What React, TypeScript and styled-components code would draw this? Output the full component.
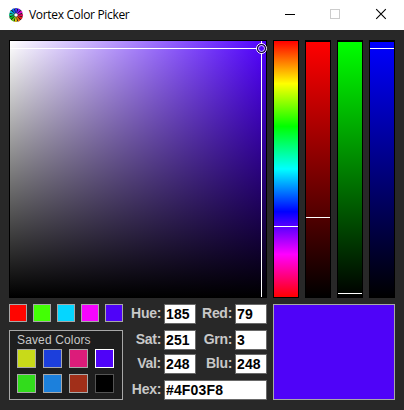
import React from 'react';
import styled, { createGlobalStyle } from 'styled-components';

const GlobalStyle = createGlobalStyle`
  * { box-sizing: border-box; }
  body { margin: 0; background: #282828; }
`;

const Window = styled.div`
  width: 404px;
  height: 410px;
  overflow: hidden;
  background: #282828;
  font-family: 'Liberation Sans', Arial, sans-serif;
`;

const TitleBar = styled.header`
  display: flex;
  align-items: center;
  height: 30px;
  padding-left: 8px;
  background: #fff;
`;

const Title = styled.h1`
  flex: 1;
  margin: 0 0 0 5px;
  font: 400 12px/16px 'Open Sans', 'Noto Sans', sans-serif;
  letter-spacing: -0.33px;
  color: #000;
  white-space: nowrap;
`;

const Controls = styled.div`
  display: flex;
  gap: 30px;
  padding-right: 14px;
`;

const ControlButton = styled.button`
  display: block;
  width: 16px;
  height: 16px;
  padding: 0;
  border: 0;
  background: none;
  svg { display: block; }
`;

const Pickers = styled.div`
  display: flex;
  gap: 6px;
  padding: 10px 9px 0;
`;

const Field = styled.div`
  position: relative;
  width: 258px;
  height: 258px;
  border: 1px solid #000;
  background:
    linear-gradient(to bottom, transparent, #000),
    linear-gradient(to right, #fff, #5000ff);
`;

const Crosshair = styled.svg`
  position: absolute;
  inset: 0;
  overflow: visible;
`;

const Track = styled.div<{ $fill: string; $top?: number }>`
  position: relative;
  width: 26px;
  height: 258px;
  border: 1px solid #000;
  border-top-width: ${(p) => p.$top ?? 2}px;
  background: ${(p) => p.$fill};
`;

const Marker = styled.div<{ $y: number }>`
  position: absolute;
  left: 0;
  right: 0;
  top: ${(p) => p.$y}px;
  height: 1px;
  background: #fff;
`;

const Lower = styled.div`
  display: grid;
  grid-template-columns: 114px 144px 128px;
  padding: 6px 9px 0;
`;

const SwatchRow = styled.div`
  display: flex;
  justify-content: space-between;
`;

const Swatch = styled.div<{ $color: string; $size: number; $edge?: string }>`
  width: ${(p) => p.$size}px;
  height: ${(p) => p.$size}px;
  border: 1px solid ${(p) => p.$edge ?? '#a8a8a8'};
  background: ${(p) => p.$color};
`;

const Saved = styled.section`
  height: 70px;
  margin-top: 8px;
  padding: 1px 0 0 7px;
  border: 1px solid #a8a8a8;
  background: #1e1e1e;
`;

const SavedTitle = styled.h2`
  margin: 0;
  height: 17px;
  font-size: 12px;
  font-weight: 400;
  line-height: 17px;
  letter-spacing: 0.14px;
  color: #c8c8c8;
`;

const SavedGrid = styled.div`
  display: grid;
  grid-template-columns: repeat(4, 19px);
  gap: 6px 7px;
`;

const ValueRow = styled.div<{ $gap: number }>`
  display: flex;
  height: 20px;
  margin-bottom: ${(p) => p.$gap}px;
`;

const Label = styled.label<{ $width: number }>`
  width: ${(p) => p.$width}px;
  padding-right: 3px;
  text-align: right;
  font-size: 14px;
  font-weight: 700;
  line-height: 19px;
  letter-spacing: -0.3px;
  color: #c8c8c8;
  white-space: nowrap;
`;

const Value = styled.output<{ $width: number }>`
  width: ${(p) => p.$width}px;
  height: 20px;
  padding-left: 1px;
  border: 1px solid #696969;
  background: #fff;
  font-size: 14px;
  font-weight: 700;
  line-height: 19px;
  letter-spacing: 0.15px;
  color: #000;
`;

const Preview = styled.div`
  width: 122px;
  height: 96px;
  margin-left: 6px;
  border: 1px solid #a8a8a8;
  background: #4f03f8;
`;

const petals = ['#3838ff', '#8b10f8', '#e010d0', '#e01060', '#f02020', '#f07010', '#e0c810', '#68d020', '#10c020', '#10d090', '#10b8e0', '#1068f0'];

const rows = [
  { gap: 6, cells: [['Hue:', '185'], ['Red:', '79']] },
  { gap: 4, cells: [['Sat:', '251'], ['Grn:', '3']] },
  { gap: 6, cells: [['Val:', '248'], ['Blu:', '248']] },
];

const quick = ['#ff0500', '#43ff05', '#05d6ff', '#f605ff', '#4f03f8'];
const saved = ['#c8da19', '#1c3fdc', '#dc1c7a', '#4f03f8', '#32dc1c', '#1c80dc', '#a12f19', '#000000'];
const savedEdge = (i: number) => (i === 3 ? '#ffffff' : i === 7 ? '#545454' : '#a8a8a8');

function VortexIcon() {
  return (
    <svg width="16" height="16" viewBox="-8 -8 16 16">
      <circle r="6.8" fill="#111" />
      {petals.map((c, i) => (
        <path key={c} d="M-.3-2 L-1.1-6.6 Q.2-7.5 1.4-6.7 L.5-2Z" fill={c} transform={`rotate(${i * 30})`} />
      ))}
      <circle r="1.8" fill="#fff" />
    </svg>
  );
}

export default function App() {
  return (
    <Window>
      <GlobalStyle />
      <TitleBar>
        <VortexIcon />
        <Title>Vortex Color Picker</Title>
        <Controls>
          <ControlButton aria-label="Minimize">
            <svg width="16" height="16"><path d="M3 7.5h10" stroke="#000" /></svg>
          </ControlButton>
          <ControlButton aria-label="Maximize">
            <svg width="16" height="16"><rect x="2.5" y="2.5" width="9" height="9" fill="none" stroke="#ccc" /></svg>
          </ControlButton>
          <ControlButton aria-label="Close">
            <svg width="16" height="16"><path d="M2.2 2.2l9.6 9.6M11.8 2.2l-9.6 9.6" stroke="#000" strokeWidth="1.1" /></svg>
          </ControlButton>
        </Controls>
      </TitleBar>
      <Pickers>
        <Field>
          <Crosshair width="256" height="256">
            <path d="M0 7.5h247M251.5 0v3M251.5 12v244" stroke="#fff" />
            <circle cx="251.5" cy="7.5" r="5" fill="none" stroke="#fff" />
            <circle cx="251.5" cy="7.5" r="4" fill="none" stroke="#000" />
            <circle cx="251.5" cy="7.5" r="3" fill="none" stroke="#fff" strokeWidth="0.8" />
          </Crosshair>
        </Field>
        <Track $top={1} $fill="linear-gradient(#f00, #ff0 16.67%, #0f0 33.33%, #0ff 50%, #00f 66.67%, #f0f 83.33%, #f00)">
          <Marker $y={185} />
        </Track>
        <Track $fill="linear-gradient(#f00, #000)"><Marker $y={175} /></Track>
        <Track $fill="linear-gradient(#0f0, #000)"><Marker $y={251} /></Track>
        <Track $fill="linear-gradient(#00f, #000)"><Marker $y={6} /></Track>
      </Pickers>
      <Lower>
        <div>
          <SwatchRow>{quick.map((c) => <Swatch key={c} $color={c} $size={18} />)}</SwatchRow>
          <Saved>
            <SavedTitle>Saved Colors</SavedTitle>
            <SavedGrid>{saved.map((c, i) => <Swatch key={c} $color={c} $size={19} $edge={savedEdge(i)} />)}</SavedGrid>
          </Saved>
        </div>
        <div>
          {rows.map((r) => (
            <ValueRow key={r.cells[0][0]} $gap={r.gap}>
              {r.cells.map(([name, value], i) => (
                <React.Fragment key={name}>
                  <Label $width={i ? 39 : 41}>{name}</Label>
                  <Value $width={32}>{value}</Value>
                </React.Fragment>
              ))}
            </ValueRow>
          ))}
          <ValueRow $gap={0}>
            <Label $width={41}>Hex:</Label>
            <Value $width={103}>#4F03F8</Value>
          </ValueRow>
        </div>
        <Preview />
      </Lower>
    </Window>
  );
}
